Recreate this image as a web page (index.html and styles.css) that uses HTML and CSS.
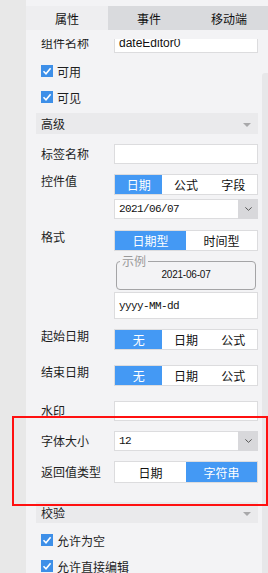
FILE: index.html
```html
<!DOCTYPE html>
<html lang="zh-CN">
<head>
  <meta charset="UTF-8" />
  <meta name="viewport" content="width=device-width, initial-scale=1.0"/>
  <title>控件属性</title>
  <link rel="stylesheet" href="styles.css">
</head>
<body>
  <div class="app">
    <div class="side"></div>

    <div class="panel">
      <div class="tabs">
        <div class="tab active">属性</div>
        <div class="tab">事件</div>
        <div class="tab">移动端</div>
      </div>

      <div class="body">
        <div class="scroll">
          <div class="content">

            <div class="row">
              <div class="label">组件名称</div>
              <div class="input text-sans">dateEditor0</div>
            </div>

            <div class="check first"><span class="box"><svg viewBox="0 0 12 12"><polyline points="2.5,6.2 5,8.7 9.6,3.2" /></svg></span>可用</div>
            <div class="check"><span class="box"><svg viewBox="0 0 12 12"><polyline points="2.5,6.2 5,8.7 9.6,3.2" /></svg></span>可见</div>

            <div class="section">高级<span class="tri"></span></div>

            <div class="row gap10">
              <div class="label">标签名称</div>
              <div class="input"></div>
            </div>

            <div class="row gap10">
              <div class="label seg-label">控件值</div>
              <div class="seg three">
                <div class="opt on">日期</div>
                <div class="opt">公式</div>
                <div class="opt">字段</div>
              </div>
            </div>

            <div class="row sub">
              <div class="select">
                <div class="value text-mono">2021/06/07</div>
                <div class="drop"><svg viewBox="0 0 10 6"><polyline points="1.5,1.2 5,4.5 8.5,1.2" /></svg></div>
              </div>
            </div>

            <div class="row gap11">
              <div class="label seg-label">格式</div>
              <div class="seg two">
                <div class="opt on">日期型</div>
                <div class="opt">时间型</div>
              </div>
            </div>

            <div class="row fs-row">
              <fieldset class="sample">
                <legend>示例</legend>
                <div class="sample-text">2021-06-07</div>
              </fieldset>
            </div>

            <div class="row fmt-row">
              <div class="input tall text-mono">yyyy-MM-dd</div>
            </div>

            <div class="row gap10">
              <div class="label seg-label">起始日期</div>
              <div class="seg three">
                <div class="opt on">无</div>
                <div class="opt">日期</div>
                <div class="opt">公式</div>
              </div>
            </div>

            <div class="row gap15">
              <div class="label seg-label">结束日期</div>
              <div class="seg three">
                <div class="opt on">无</div>
                <div class="opt">日期</div>
                <div class="opt">公式</div>
              </div>
            </div>

            <div class="row gap15">
              <div class="label">水印</div>
              <div class="input"></div>
            </div>

            <div class="row gap10">
              <div class="label">字体大小</div>
              <div class="select">
                <div class="value text-mono">12</div>
                <div class="drop"><svg viewBox="0 0 10 6"><polyline points="1.5,1.2 5,4.5 8.5,1.2" /></svg></div>
              </div>
            </div>

            <div class="row gap10">
              <div class="label mid-label">返回值类型</div>
              <div class="seg two high">
                <div class="opt">日期</div>
                <div class="opt on">字符串</div>
              </div>
            </div>

            <div class="section late">校验<span class="tri"></span></div>

            <div class="check after-section"><span class="box"><svg viewBox="0 0 12 12"><polyline points="2.5,6.2 5,8.7 9.6,3.2" /></svg></span>允许为空</div>
            <div class="check"><span class="box"><svg viewBox="0 0 12 12"><polyline points="2.5,6.2 5,8.7 9.6,3.2" /></svg></span>允许直接编辑</div>

          </div>
        </div>
        <div class="track"><div class="thumb"></div></div>
      </div>
    </div>

    <!-- highlight frame drawn over the panel -->
    <div class="highlight"></div>
  </div>
</body>
</html>
```

FILE: styles.css
```css
body {
  margin: 0;
  font-family: "Noto Sans CJK SC", "Liberation Sans", sans-serif;
  font-size: 12px;
  color: #1e1e1e;
  background: #f3f3f5;
}

.app {
  position: relative;
  display: flex;
  height: 573px;
  overflow: hidden;
}

.side {
  width: 26px;
  background: #e8e8e8;
}

.panel {
  flex: 1;
  display: flex;
  flex-direction: column;
  padding-top: 6px;
  background: #f3f3f5;
  min-width: 0;
}

.tabs {
  display: grid;
  grid-template-columns: 82px 82px 1fr;
  height: 24px;
}

.tab {
  display: flex;
  align-items: center;
  justify-content: center;
  background: #d9dadd;
  font-size: 12px;
  color: #111;
}

.tab.active {
  background: #eeeef0;
}

.body {
  flex: 1;
  display: flex;
  padding-top: 9px;
  min-height: 0;
}

.scroll {
  flex: 1;
  overflow: hidden;
  padding: 0 4px 0 10px;
}

.content {
  margin-top: -6px;
}

.track {
  width: 6px;
}

.thumb {
  margin-top: 34px;
  height: 600px;
  background: #e7e7e9;
  border-radius: 3px 0 0 0;
}

/* rows */

.row {
  display: flex;
  align-items: flex-start;
}

.label {
  width: 73px;
  padding-left: 5px;
  padding-top: 3px;
  line-height: 14px;
  white-space: nowrap;
}

.seg-label {
  padding-top: 0;
}

.mid-label {
  padding-top: 4px;
}

.gap10 { margin-top: 10px; }
.gap11 { margin-top: 11px; }
.gap15 { margin-top: 15px; }

.sub {
  margin-top: 4px;
  padding-left: 78px;
}

.fs-row {
  margin-top: 3px;
  padding-left: 80px;
}

.fmt-row {
  margin-top: 2px;
  padding-left: 78px;
}

.input {
  box-sizing: border-box;
  width: 144px;
  height: 20px;
  background: #fff;
  border: 1px solid #dcdcde;
  padding-left: 4px;
  display: flex;
  align-items: center;
  white-space: nowrap;
}

.input.tall {
  height: 27px;
}

.text-sans {
  font-family: "Liberation Sans", sans-serif;
  font-size: 12px;
  color: #111;
}

.text-mono {
  font-family: "Liberation Mono", monospace;
  font-size: 11px;
  letter-spacing: -0.6px;
  color: #111;
}

/* checkboxes */

.check {
  height: 26px;
  display: flex;
  align-items: center;
  padding-left: 5px;
}

.check.first {
  margin-top: 5px;
}

.check.after-section {
  margin-top: 4px;
}

.box {
  width: 12px;
  height: 12px;
  background: #3d8fe8;
  margin-right: 4px;
  display: flex;
}

.box svg {
  width: 12px;
  height: 12px;
  fill: none;
  stroke: #fff;
  stroke-width: 1.6;
}

/* section headers */

.section {
  margin-top: 3px;
  height: 21px;
  background: #eaeaec;
  display: flex;
  align-items: center;
  justify-content: space-between;
  padding: 0 7px 0 5px;
}

.section.late {
  margin-top: 19px;
}

.tri {
  width: 0;
  height: 0;
  border-left: 4px solid transparent;
  border-right: 4px solid transparent;
  border-top: 4px solid #a8a8aa;
  margin-top: 3px;
}

/* segmented buttons */

.seg {
  box-sizing: border-box;
  width: 144px;
  height: 21px;
  display: grid;
  border: 1px solid #dcdcde;
  background: #fff;
}

.seg.three { grid-template-columns: repeat(3, 1fr); }
.seg.two { grid-template-columns: repeat(2, 1fr); }
.seg.high { height: 22px; }

.opt {
  display: flex;
  align-items: center;
  justify-content: center;
  color: #111;
}

.opt.on {
  background: #4499f4;
  color: #fff;
}

/* selects */

.select {
  box-sizing: border-box;
  width: 144px;
  height: 20px;
  display: flex;
  background: #fff;
  border: 1px solid #dcdcde;
  border-right: none;
}

.value {
  flex: 1;
  padding-left: 4px;
  display: flex;
  align-items: center;
}

.drop {
  width: 20px;
  margin: -1px 0;
  background: #d8d8db;
  display: flex;
  align-items: center;
  justify-content: center;
}

.drop svg {
  width: 9px;
  height: 6px;
  fill: none;
  stroke: #555;
  stroke-width: 1.1;
}

/* example box */

.sample {
  box-sizing: border-box;
  width: 140px;
  margin: 0;
  padding: 0 3px 7px;
  border: 1px solid #a4a4a6;
  border-radius: 4px;
}

.sample legend {
  padding: 0 2px;
  color: #9a9a9a;
  font-size: 12px;
  line-height: 14px;
}

.sample-text {
  text-align: center;
  line-height: 14px;
  font-family: "Liberation Sans", sans-serif;
  font-size: 10px;
  letter-spacing: -0.2px;
  color: #111;
}

/* red annotation frame */

.highlight {
  position: absolute;
  left: 12px;
  top: 416px;
  width: 256px;
  height: 90px;
  box-sizing: border-box;
  border: 2px solid #ff1010;
  pointer-events: none;
}
```
